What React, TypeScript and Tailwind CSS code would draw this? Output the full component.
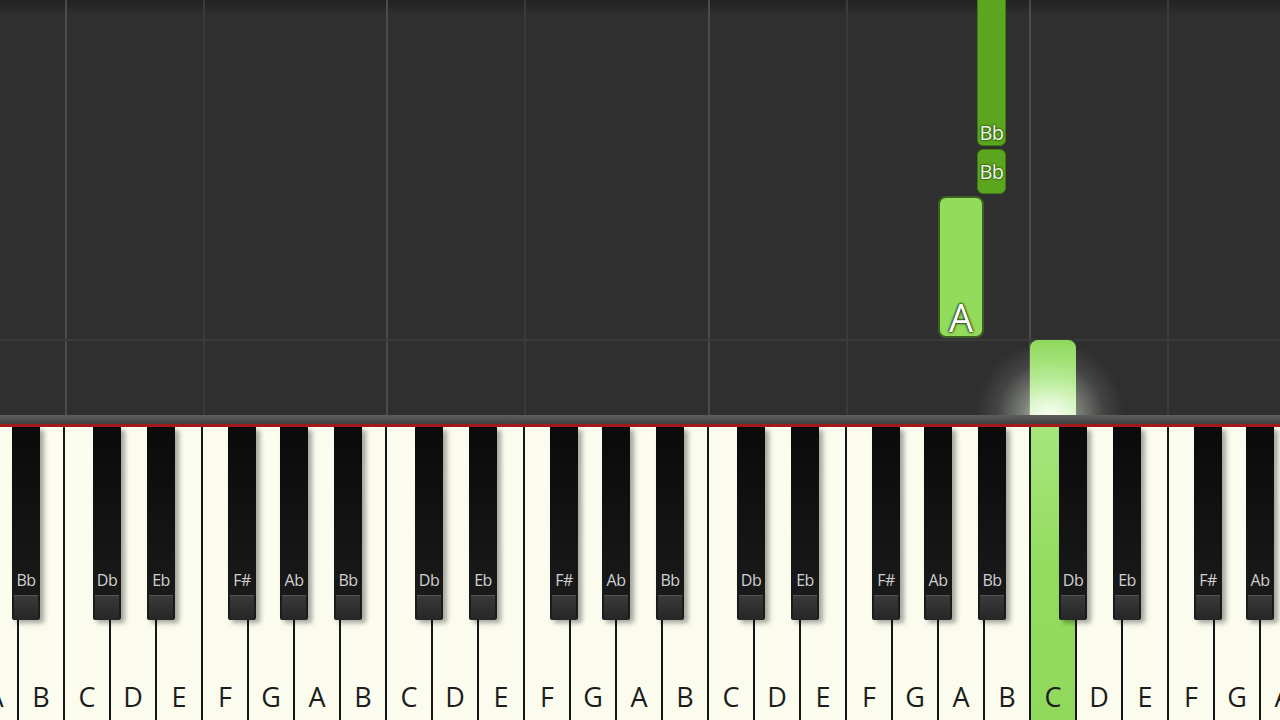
import React from 'react';

const WHITE = ['A', 'B', 'C', 'D', 'E', 'F', 'G'];
const BLACK = [
  { name: 'Db', off: 28 },
  { name: 'Eb', off: 82 },
  { name: 'F#', off: 163 },
  { name: 'Ab', off: 215 },
  { name: 'Bb', off: 269 },
];
const OCTAVES = [-257, 65, 387, 709, 1031];

const blackKeys = OCTAVES.flatMap((start) =>
  BLACK.map((k) => ({ name: k.name, left: start + k.off })),
).filter((k) => k.left > -30 && k.left < 1280);

const bright = [65, 386, 708, 1029];
const dim = [203, 524, 846, 1167];

const font = { fontFamily: '"Open Sans", "Noto Sans", sans-serif' };

export default function App() {
  return (
    <div className="w-[1280px] h-[720px] overflow-hidden flex flex-col bg-[#2e2e2e]" style={font}>
      {/* note roll */}
      <div className="relative h-[415px] shrink-0 bg-[#2f2f2f] overflow-hidden">
        <div className="absolute inset-x-0 top-0 h-[12px] bg-gradient-to-b from-[#222] to-[#2c2c2c]" />
        {bright.map((x) => (
          <div key={x} className="absolute top-0 bottom-0 w-[2px] bg-[#4b4b4b]" style={{ left: x }} />
        ))}
        {dim.map((x) => (
          <div key={x} className="absolute top-0 bottom-0 w-[2px] bg-[#3b3b3b]" style={{ left: x }} />
        ))}
        <div className="absolute inset-x-0 top-[339px] h-[2px] bg-[#3a3a3a]" />

        {/* Bb long */}
        <div className="absolute left-[977px] top-[-8px] w-[29px] h-[154px] rounded-md bg-[#5ca51f] border border-[#3f7a12] flex items-end justify-center pb-[2px]">
          <span className="text-[20px] leading-none tracking-[-0.5px] text-[#eef8e2] [text-shadow:0_0_2px_#20400a,0_0_2px_#20400a]">Bb</span>
        </div>
        {/* Bb short */}
        <div className="absolute left-[977px] top-[149px] w-[29px] h-[45px] rounded-md bg-[#5ca51f] border border-[#3f7a12] flex items-center justify-center">
          <span className="text-[20px] leading-none tracking-[-0.5px] text-[#eef8e2] [text-shadow:0_0_2px_#20400a,0_0_2px_#20400a]">Bb</span>
        </div>
        {/* A */}
        <div className="absolute left-[938px] top-[196px] w-[46px] h-[142px] rounded-lg bg-[#93db5b] border-2 border-[#3d5f24] flex items-end justify-center">
          <span className="text-[38px] leading-none text-white [text-shadow:0_0_2px_#1f3311,0_0_2px_#1f3311,0_0_3px_#1f3311]">A</span>
        </div>
        {/* C glowing */}
        <div className="absolute left-[1030px] top-[340px] w-[46px] h-[80px] rounded-t-lg bg-gradient-to-b from-[#8fd95b] via-[#a2e377] to-[#dcf6c8]" />
        <div className="absolute left-[970px] top-[345px] w-[160px] h-[140px] rounded-full bg-[radial-gradient(circle,rgba(255,255,255,0.8)_0%,rgba(240,255,230,0.4)_25%,rgba(255,255,255,0.1)_50%,rgba(255,255,255,0)_70%)]" />
      </div>

      {/* rail */}
      <div className="h-[9px] shrink-0 bg-gradient-to-b from-[#5e5e5c] to-[#404040]" />
      <div className="h-[3px] shrink-0 bg-[#a3191b]" />

      {/* keyboard */}
      <div className="relative flex-1 overflow-hidden bg-[#111]">
        <div className="flex h-full ml-[-27px]">
          {Array.from({ length: 29 }).map((_, i) => {
            const letter = WHITE[i % 7];
            const active = i === 23;
            return (
              <div
                key={i}
                className={
                  'w-[46px] shrink-0 h-full border-r-2 border-[#161616] flex items-end justify-center pb-[4px] ' +
                  (active ? 'bg-gradient-to-b from-[#a6e67c] via-[#93dc5e] to-[#90d95c]' : 'bg-[#fbfcee]')
                }
              >
                <span className="text-[27px] leading-none text-[#1c1c1c] pb-[6px]">{letter}</span>
              </div>
            );
          })}
        </div>
        {blackKeys.map((k) => (
          <div
            key={k.left}
            className="absolute top-0 w-[28px] h-[193px] rounded-b-[2px] bg-gradient-to-b from-[#0a0a0a] to-[#1c1c1c] flex flex-col items-center shadow-[4px_3px_5px_rgba(0,0,0,0.35)]"
            style={{ left: k.left }}
          >
            <span className="mt-[145px] text-[16px] leading-none tracking-[-0.5px] text-[#d0d0d0]">{k.name}</span>
            <div className="mt-[7px] w-[24px] h-[25px] border-t border-[#555] bg-gradient-to-b from-[#3a3a3a] to-[#262626] rounded-b-[1px]" />
          </div>
        ))}
      </div>
    </div>
  );
}
